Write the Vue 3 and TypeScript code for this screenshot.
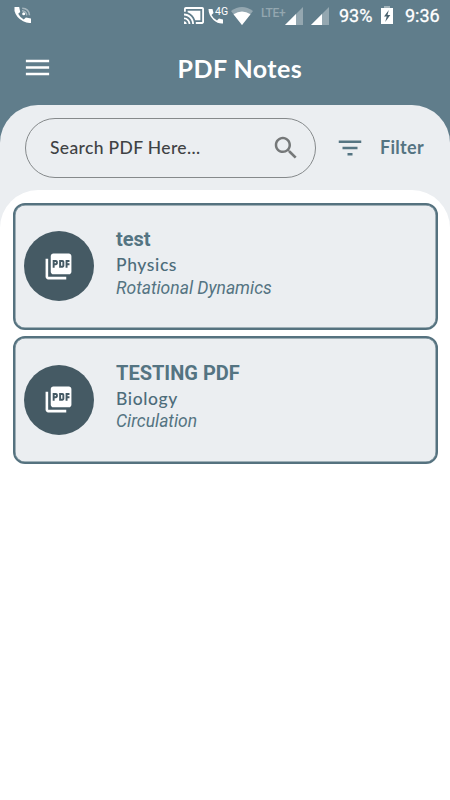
<script setup lang="ts">
interface Note {
  title: string
  subject: string
  chapter: string
}

const notes: Note[] = [
  { title: 'test', subject: 'Physics', chapter: 'Rotational Dynamics' },
  { title: 'TESTING PDF', subject: 'Biology', chapter: 'Circulation' },
]
</script>

<template>
  <div class="screen">
    <div class="status">
      <svg class="call" viewBox="0 0 18 18">
        <path d="M.5 1h4.700l1 5-2 1.800q2 4 5.500 5.600l2.200-2 5.100 1v4.600Q13 17.500 9.200 15.300 2.300 11.800.5 5z" fill="#fff" />
        <circle cx="9.700" cy="7.800" r="1.500" fill="#fff" />
        <path d="M8 4.800Q12.300 5 12.800 9.300M8.200 2.300q6.700.2 7.300 7" fill="none" stroke="#a6b6be" stroke-width="1.500" />
      </svg>
      <svg class="cast" viewBox="1 3 22 18" preserveAspectRatio="none">
        <path fill="#fff" d="M1 18v3h3c0-1.660-1.340-3-3-3zm0-4v2c2.760 0 5 2.240 5 5h2c0-3.870-3.130-7-7-7zm18-7H5v1.630c3.960 1.280 7.090 4.410 8.370 8.370H19V7zM1 10v2c4.970 0 9 4.030 9 9h2c0-6.080-4.930-11-11-11zm20-7H3c-1.100 0-2 .9-2 2v3h2V5h18v14h-7v2h7c1.100 0 2-.9 2-2V5c0-1.100-.9-2-2-2z" />
      </svg>
      <div class="volte">
        <svg viewBox="0 0 16 16">
          <path d="M.5 1h4l1 4-2 2q2 4 5.500 5.500l2-2 4 1v4Q10 16 5.500 12 .5 7 .5 1z" fill="#fff" />
        </svg>
        <span class="gen">4G</span>
      </div>
      <svg class="wifi" viewBox="0 0 22 18">
        <path d="M0 4Q11-4 22 4L11 18z" fill="#94a7b0" />
        <path d="M2.500 7.300Q11 1.500 19.500 7.300L11 18z" fill="#fff" />
      </svg>
      <span class="lte">LTE+</span>
      <svg class="signal" viewBox="0 0 18 18">
        <path d="M18 0v18H0z" fill="#94a7b0" />
        <path d="M11 7v11H0z" fill="#fff" />
      </svg>
      <svg class="signal second" viewBox="0 0 18 18">
        <path d="M18 0v18H0z" fill="#94a7b0" />
        <path d="M11 7v11H0z" fill="#fff" />
      </svg>
      <span class="percent">93%</span>
      <svg class="battery" viewBox="0 0 12 18">
        <path d="M3 0h6v2H3z" fill="#a3b3ba" />
        <path d="M0 2h12v16H0z" fill="#fff" />
        <path d="M7.800 4 3 10.500h2.700L4.200 16 9.300 9H6.500z" fill="#49616d" />
      </svg>
      <span class="clock">9:36</span>
    </div>

    <header class="appbar">
      <svg class="menu" viewBox="0 0 24 24"><path d="M3 18h18v-2H3v2zm0-5h18v-2H3v2zm0-7v2h18V6H3z" /></svg>
      <h1>PDF Notes</h1>
    </header>

    <main class="panel">
      <div class="tools">
        <div class="search">
          <span class="hint">Search PDF Here...</span>
          <svg viewBox="0 0 24 24"><path d="M15.500 14h-.79l-.28-.27C15.410 12.590 16 11.110 16 9.500 16 5.910 13.090 3 9.500 3S3 5.910 3 9.500 5.910 16 9.500 16c1.610 0 3.090-.59 4.230-1.570l.27.28v.79l5 4.990L20.490 19l-4.990-5zm-6 0C7.010 14 5 11.990 5 9.500S7.010 5 9.500 5 14 7.010 14 9.500 11.990 14 9.500 14z" /></svg>
        </div>
        <div class="filter">
          <svg viewBox="0 0 24 24"><path d="M10 18h4v-2h-4v2zM3 6v2h18V6H3zm3 7h12v-2H6v2z" /></svg>
          <span>Filter</span>
        </div>
      </div>

      <section class="list">
        <article v-for="note in notes" :key="note.title" class="card">
          <div class="badge">
            <svg viewBox="0 0 24 24"><path d="M20 2H8c-1.100 0-2 .9-2 2v12c0 1.100.9 2 2 2h12c1.100 0 2-.9 2-2V4c0-1.100-.9-2-2-2zm-8.500 7.500c0 .83-.67 1.500-1.500 1.500H9v2H7.500V7H10c.83 0 1.500.67 1.500 1.500v1zm5 2c0 .83-.67 1.500-1.500 1.500h-2.500V7H15c.83 0 1.500.67 1.500 1.500v3zm4-3H19v1h1.500V11H19v2h-1.500V7h3v1.500zM9 9.500h1v-1H9v1zM4 6H2v14c0 1.100.9 2 2 2h14v-2H4V6zm10 5.500h1v-3h-1v3z" /></svg>
          </div>
          <div class="info">
            <h2>{{ note.title }}</h2>
            <p class="subject">{{ note.subject }}</p>
            <p class="chapter">{{ note.chapter }}</p>
          </div>
        </article>
      </section>
    </main>
  </div>
</template>

<style>
body {
  margin: 0;
  background: #fff;
}
</style>

<style scoped>
.screen {
  width: 450px;
  height: 800px;
  overflow: hidden;
  background: #607d8b;
  font-family: Roboto, sans-serif;
  display: flex;
  flex-direction: column;
}
svg {
  display: block;
  flex: none;
}
.status {
  height: 32px;
  box-sizing: border-box;
  padding-left: 14px;
  display: flex;
  align-items: center;
  color: #fff;
  white-space: nowrap;
}
.call { width: 18px; height: 18px; margin-top: -2px; }
.cast { width: 20px; height: 17px; margin-left: 152px; margin-top: -1px; }
.volte {
  width: 20px;
  height: 18px;
  margin-left: 4px;
  position: relative;
}
.volte svg { width: 16px; height: 16px; margin-top: 1px; }
.gen {
  position: absolute;
  left: 7px;
  top: -1px;
  font-size: 10.500px;
  line-height: 12px;
}
.wifi { width: 22px; height: 18px; margin-left: 3px; margin-top: -1px; }
.lte {
  width: 24px;
  margin-left: 8px;
  margin-top: -7px;
  font-size: 12px;
  line-height: 12px;
  letter-spacing: -0.4px;
  font-weight: 500;
  color: #94a7b0;
}
.signal { width: 18px; height: 18px; }
.signal.second { margin-left: 8px; }
.percent {
  width: 33px;
  margin-left: 10px;
  font-size: 18px;
  line-height: 20px;
  -webkit-text-stroke: 0.3px #fff;
}
.battery { width: 12px; height: 18px; margin-left: 9px; margin-top: -2px; }
.clock {
  margin-left: 12px;
  font-size: 18px;
  line-height: 20px;
  -webkit-text-stroke: 0.3px #fff;
}
.appbar {
  height: 73px;
  flex: none;
  display: flex;
  align-items: center;
  padding-left: 22px;
}
.menu { width: 31px; height: 31px; fill: #fff; margin-top: -2px; }
h1 {
  margin: -2px 0 0 124.500px;
  font: 700 25px/30px Lato, sans-serif;
  letter-spacing: 0.45px;
  color: #fff;
  white-space: nowrap;
}
.panel {
  flex: 1;
  background: #ebeef1;
  border-radius: 38px 38px 0 0;
  display: flex;
  flex-direction: column;
}
.tools {
  height: 85px;
  flex: none;
  display: flex;
  align-items: center;
  padding-left: 25px;
}
.search {
  width: 291px;
  height: 60px;
  box-sizing: border-box;
  border: 1px solid #85898b;
  border-radius: 30px;
  padding: 0 14px 0 24px;
  display: flex;
  align-items: center;
  justify-content: space-between;
}
.hint {
  font: 500 17.500px/24px Lato, sans-serif;
  letter-spacing: 0.35px;
  color: #3f4244;
  white-space: nowrap;
}
.search svg { width: 30px; height: 30px; fill: #757879; }
.filter {
  display: flex;
  align-items: center;
  margin-left: 19px;
  color: #547482;
  font: 700 18px/24px Lato, sans-serif;
  letter-spacing: 0.3px;
}
.filter svg { width: 30px; height: 30px; fill: #547482; }
.filter span { margin-left: 15px; margin-top: -1px; }
.list {
  flex: 1;
  background: #fff;
  border-radius: 38px 38px 0 0;
  padding: 12.500px 12.500px 0;
  display: flex;
  flex-direction: column;
  gap: 6px;
}
.card {
  height: 127.500px;
  box-sizing: border-box;
  border: 2px solid #55727f;
  box-shadow: inset 0 0 0 0.5px #55727f;
  border-radius: 12px;
  background: #ebeef1;
  display: flex;
  padding: 0 9.500px;
}
.badge {
  width: 70px;
  height: 70px;
  margin-top: 26.500px;
  border-radius: 50%;
  background: #455a64;
  display: flex;
  align-items: center;
  justify-content: center;
}
.badge svg { width: 31px; height: 31px; fill: #fff; margin-right: 1.500px; }
.info {
  margin: 21.500px 0 0 22px;
  color: #547482;
}
h2 {
  margin: 0;
  font-size: 20px;
  line-height: 26px;
  font-weight: 700;
}
p { margin: 0; }
.subject {
  margin-top: 1px;
  font: 500 17.500px/24px Lato, sans-serif;
  letter-spacing: 0.6px;
  color: #4d6c7a;
}
.chapter {
  margin-top: -0.5px;
  font-size: 17.500px;
  line-height: 22px;
  font-style: italic;
}
</style>
